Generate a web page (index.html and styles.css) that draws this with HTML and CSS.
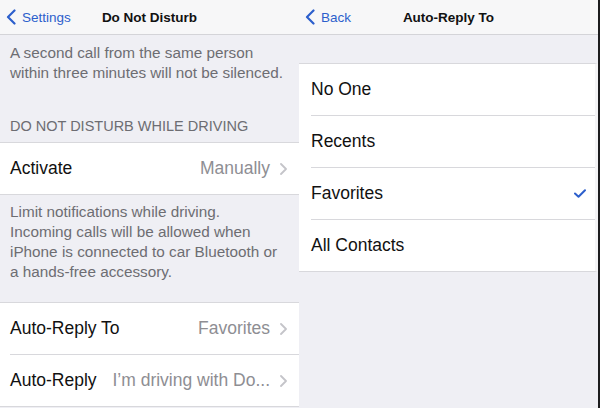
FILE: index.html
```html
<!DOCTYPE html>
<html lang="en">
<head>
  <meta charset="UTF-8" />
  <meta name="viewport" content="width=device-width, initial-scale=1.0" />
  <title>Do Not Disturb While Driving</title>
  <link rel="stylesheet" href="styles.css">
</head>
<body>
  <div class="screens">
    <!-- left: Do Not Disturb settings -->
    <section class="screen">
      <header class="navbar">
        <a href="#" class="nav-back">
          <svg class="back-icon" width="10" height="16" viewBox="0 0 10 16"><path d="M8.5 1.5 L2 8 L8.5 14.5" /></svg>
          Settings
        </a>
        <h1 class="nav-title">Do Not Disturb</h1>
      </header>

      <p class="group-footer group-footer-top">
        A second call from the same person<br>within three minutes will not be silenced.
      </p>

      <h2 class="group-header">DO NOT DISTURB WHILE DRIVING</h2>
      <ul class="group">
        <li class="cell">
          <span class="cell-label">Activate</span>
          <span class="cell-value">Manually</span>
          <svg class="chevron" width="7" height="12" viewBox="0 0 7 12"><path d="M1 1 L6 6 L1 11" /></svg>
        </li>
      </ul>
      <p class="group-footer">
        Limit notifications while driving.<br>Incoming calls will be allowed when<br>iPhone is connected to car Bluetooth or<br>a hands-free accessory.
      </p>

      <ul class="group group-spaced">
        <li class="cell">
          <span class="cell-label">Auto-Reply To</span>
          <span class="cell-value">Favorites</span>
          <svg class="chevron" width="7" height="12" viewBox="0 0 7 12"><path d="M1 1 L6 6 L1 11" /></svg>
        </li>
        <li class="cell">
          <span class="cell-label">Auto-Reply</span>
          <span class="cell-value cell-value-long">I’m driving with Do...</span>
          <svg class="chevron" width="7" height="12" viewBox="0 0 7 12"><path d="M1 1 L6 6 L1 11" /></svg>
        </li>
      </ul>
    </section>

    <!-- right: Auto-Reply To picker -->
    <section class="screen screen-right">
      <header class="navbar">
        <a href="#" class="nav-back">
          <svg class="back-icon" width="10" height="16" viewBox="0 0 10 16"><path d="M8.5 1.5 L2 8 L8.5 14.5" /></svg>
          Back
        </a>
        <h1 class="nav-title">Auto-Reply To</h1>
      </header>

      <ul class="group group-top">
        <li class="cell"><span class="cell-label">No One</span></li>
        <li class="cell"><span class="cell-label">Recents</span></li>
        <li class="cell">
          <span class="cell-label">Favorites</span>
          <svg class="check" width="12" height="9" viewBox="0 0 12 9"><path d="M1 4.5 L4.5 7.8 L11 1.2" /></svg>
        </li>
        <li class="cell"><span class="cell-label">All Contacts</span></li>
      </ul>
    </section>
  </div>
</body>
</html>
```

FILE: styles.css
```css
body {
  margin: 0;
  padding: 0;
  font-family: 'Liberation Sans', Arial, sans-serif;
  background-color: #efeff4;
  color: #000;
}

.screens {
  display: flex;
  width: 600px;
  height: 408px;
  overflow: hidden;
}

.screen {
  width: 299px;
  background-color: #efeff4;
}

.screen-right {
  border-right: 2px solid #1c1c1e;
}

.navbar {
  display: grid;
  grid-template-columns: 1fr auto 1fr;
  align-items: center;
  height: 34px;
  background-color: #f7f7f8;
  border-bottom: 1px solid #d4d4d8;
}

.nav-back {
  display: flex;
  align-items: center;
  gap: 6px;
  padding-left: 6px;
  font-size: 13.5px;
  color: #2c5fcc;
  text-decoration: none;
}

.back-icon path {
  fill: none;
  stroke: #2c5fcc;
  stroke-width: 2.2;
  stroke-linecap: round;
  stroke-linejoin: round;
}

.nav-title {
  margin: 0;
  font-size: 13.5px;
  font-weight: bold;
  color: #111;
}

.group-footer {
  margin: 0;
  padding: 7px 10px 0;
  font-size: 15.3px;
  line-height: 20px;
  color: #6d6d72;
}

.group-footer-top {
  padding-top: 8px;
}

.group-header {
  margin: 33px 0 0;
  padding: 0 10px 6px;
  font-size: 14.5px;
  font-weight: normal;
  line-height: 20px;
  color: #6d6d72;
}

.group {
  list-style: none;
  margin: 0;
  padding: 0 0 0 10px;
  background-color: #fff;
  border-top: 1px solid #d8d8dc;
  border-bottom: 1px solid #d8d8dc;
}

.group-spaced {
  margin-top: 20px;
}

.group-top {
  margin-top: 28px;
  padding-left: 12px;
  border-right: 3px solid #f4f4f6;
}

.cell {
  display: flex;
  align-items: center;
  height: 51px;
  padding-right: 12px;
  font-size: 17.5px;
  color: #111;
}

.cell + .cell {
  border-top: 1px solid #d8d8dc;
}

.cell-label {
  flex: 1;
  white-space: nowrap;
}

.cell-value {
  color: #8e8e93;
  white-space: nowrap;
  margin-right: 10px;
}

.cell-value-long {
  margin-left: 10px;
}

.chevron path {
  fill: none;
  stroke: #c4c4c9;
  stroke-width: 1.8;
  stroke-linecap: round;
  stroke-linejoin: round;
}

.check {
  margin-right: -3px;
}

.check path {
  fill: none;
  stroke: #2c5fcc;
  stroke-width: 2;
  stroke-linecap: round;
  stroke-linejoin: round;
}
```
